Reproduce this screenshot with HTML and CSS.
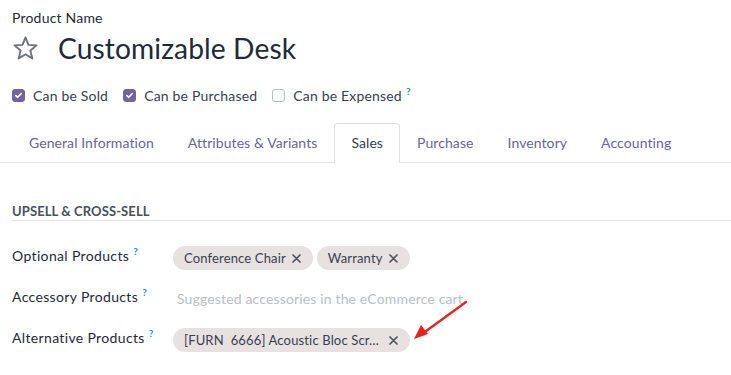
FILE: index.html
```html
<!DOCTYPE html>
<html lang="en">
<head>
    <meta charset="UTF-8">
    <meta name="viewport" content="width=device-width, initial-scale=1.0">
    <title>Customizable Desk</title>
    <link rel="stylesheet" href="styles.css">
</head>
<body>
    <div class="sheet">
        <div class="product-label">Product Name</div>
        <div class="title-row">
            <svg class="star" width="27" height="27" viewBox="0 0 26 26">
                <path d="M13 2.3 L15.9 9.5 L23.6 10 L17.7 15 L19.6 22.6 L13 18.5 L6.4 22.6 L8.3 15 L2.4 10 L10.1 9.5 Z" fill="none" stroke="#6c717a" stroke-width="1.8" stroke-linejoin="round"/>
            </svg>
            <h1>Customizable Desk</h1>
        </div>

        <div class="checks">
            <label class="check">
                <span class="box checked">
                    <svg width="9" height="9" viewBox="0 0 9 9"><path d="M1.8 4.6 L3.7 6.3 L7.2 2.6" fill="none" stroke="#fff" stroke-width="1.6" stroke-linecap="round" stroke-linejoin="round"/></svg>
                </span>
                <span>Can be Sold</span>
            </label>
            <label class="check">
                <span class="box checked">
                    <svg width="9" height="9" viewBox="0 0 9 9"><path d="M1.8 4.6 L3.7 6.3 L7.2 2.6" fill="none" stroke="#fff" stroke-width="1.6" stroke-linecap="round" stroke-linejoin="round"/></svg>
                </span>
                <span>Can be Purchased</span>
            </label>
            <label class="check">
                <span class="box"></span>
                <span>Can be Expensed<sup class="help">?</sup></span>
            </label>
        </div>

        <ul class="tabs">
            <li>General Information</li>
            <li>Attributes &amp; Variants</li>
            <li class="active">Sales</li>
            <li>Purchase</li>
            <li>Inventory</li>
            <li>Accounting</li>
        </ul>

        <div class="group-title">UPSELL &amp; CROSS-SELL</div>

        <div class="rows">
            <div class="field-label">Optional Products<sup class="help">?</sup></div>
            <div class="tags">
                <span class="tag">Conference Chair
                    <svg class="del" width="9" height="9" viewBox="0 0 9 9"><path d="M1 1 L8 8 M8 1 L1 8" stroke="#50555d" stroke-width="1.7" stroke-linecap="round"/></svg>
                </span>
                <span class="tag">Warranty
                    <svg class="del" width="9" height="9" viewBox="0 0 9 9"><path d="M1 1 L8 8 M8 1 L1 8" stroke="#50555d" stroke-width="1.7" stroke-linecap="round"/></svg>
                </span>
            </div>

            <div class="field-label">Accessory Products<sup class="help">?</sup></div>
            <div class="placeholder">Suggested accessories in the eCommerce cart</div>

            <div class="field-label">Alternative Products<sup class="help">?</sup></div>
            <div class="tags">
                <span class="tag"><span class="tag-text">[FURN&nbsp;&nbsp;6666] Acoustic Bloc Scr…</span>
                    <svg class="del" width="9" height="9" viewBox="0 0 9 9"><path d="M1 1 L8 8 M8 1 L1 8" stroke="#50555d" stroke-width="1.7" stroke-linecap="round"/></svg>
                </span>
            </div>
        </div>
    </div>

    <!-- annotation arrow -->
    <svg class="arrow" width="60" height="45" viewBox="0 0 60 45">
        <line x1="55" y1="4" x2="11" y2="36" stroke="#e8221f" stroke-width="2.4" stroke-linecap="round"/>
        <path d="M3 41 L10 27 L17 36 Z" fill="#e8221f"/>
    </svg>
</body>
</html>
```

FILE: styles.css
```css
body {
    margin: 0;
    font-family: Lato, "Noto Sans", sans-serif;
    color: #374151;
    background: #fff;
    position: relative;
    overflow: hidden;
}
.sheet {
    padding: 8px 0 0 12px;
}
.product-label {
    font-size: 14px;
    line-height: 20px;
    color: #1f2937;
    letter-spacing: 0.2px;
}
.title-row {
    display: flex;
    align-items: center;
    gap: 19px;
    height: 36px;
    margin-top: 2px;
}
.star {
    display: block;
}
h1 {
    margin: 0;
    font-size: 28.2px;
    font-weight: 400;
    color: #1f2937;
    letter-spacing: 0.1px;
}
.checks {
    display: flex;
    gap: 15px;
    margin-top: 19px;
    height: 20px;
    align-items: center;
    font-size: 14px;
    letter-spacing: 0.18px;
}
.check {
    display: flex;
    align-items: center;
    gap: 8px;
    color: #374151;
}
.box {
    width: 13px;
    height: 13px;
    box-sizing: border-box;
    border: 1px solid #b8bcc4;
    border-radius: 3px;
    display: flex;
    align-items: center;
    justify-content: center;
}
.box.checked {
    background: #71639e;
    border-color: #71639e;
}
.help {
    color: #1a8fb5;
    font-size: 10px;
    font-weight: 700;
    margin-left: 4px;
    vertical-align: 6px;
    line-height: 0;
}
.tabs {
    list-style: none;
    margin: 18px 0 0 -12px;
    padding: 0 0 0 12px;
    display: flex;
    border-bottom: 1px solid #dee2e6;
}
.tabs li {
    height: 38px;
    line-height: 37px;
    padding: 0 16px;
    font-size: 14px;
    letter-spacing: 0.08px;
    color: #6b6591;
    border: 1px solid transparent;
    border-bottom: none;
    margin-bottom: -1px;
    border-radius: 4px 4px 0 0;
}
.tabs li.active {
    color: #374151;
    background: #fff;
    border-color: #dee2e6;
    height: 39px;
}
.group-title {
    margin-top: 39px;
    font-size: 13px;
    font-weight: 700;
    line-height: 18px;
    color: #4a505a;
    letter-spacing: 0.1px;
    border-bottom: 1px solid #e2e5e9;
}
.rows {
    display: grid;
    grid-template-columns: 161px 1fr;
    row-gap: 17px;
    margin-top: 25px;
}
.field-label {
    font-size: 14px;
    line-height: 20px;
    color: #1f2937;
    letter-spacing: 0.35px;
}
.tags {
    display: flex;
    gap: 4px;
    height: 24px;
}
.tag {
    display: flex;
    align-items: center;
    gap: 6px;
    height: 24px;
    padding: 0 12px 0 11px;
    border-radius: 12px;
    background: #e7e1e1;
    font-size: 13px;
    letter-spacing: 0.15px;
    color: #374151;
    white-space: nowrap;
}
.tag-text {
    margin-right: 4px;
}
.del {
    display: block;
}
.placeholder {
    font-size: 14px;
    line-height: 24px;
    color: #b9bec6;
    padding-left: 4px;
    letter-spacing: 0.15px;
}
.arrow {
    position: absolute;
    left: 411px;
    top: 298px;
}
```
